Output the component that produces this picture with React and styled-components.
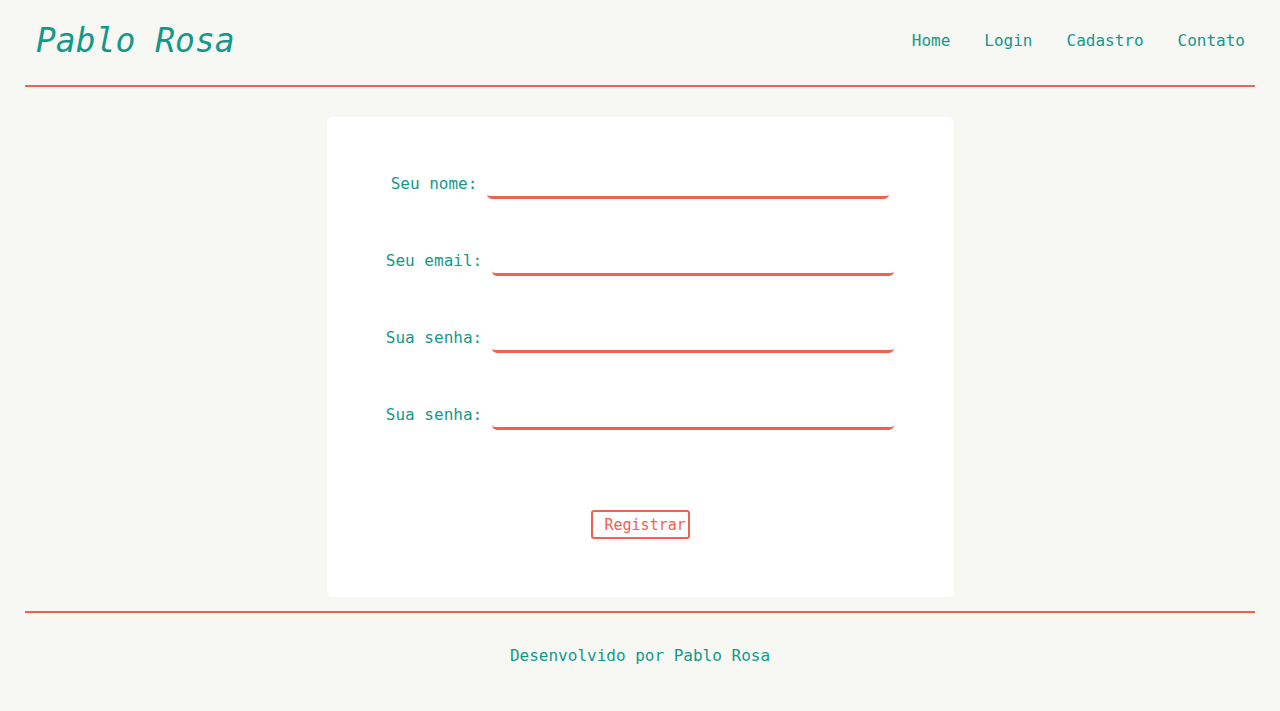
import React, { useState } from 'react';
import styled, { createGlobalStyle } from 'styled-components';

const TEAL = '#13998a';
const CORAL = '#f2604e';

const GlobalStyle = createGlobalStyle`
  html, body {
    margin: 0;
    padding: 0;
    background-color: #f7f7f3;
  }
  body {
    font-family: "DejaVu Sans Mono", "Liberation Mono", monospace;
    color: ${TEAL};
  }
  * {
    box-sizing: border-box;
  }
`;

const Page = styled.div`
  padding: 0 25px;
  min-height: 711px;
`;

const Header = styled.header`
  display: flex;
  align-items: center;
  justify-content: space-between;
  height: 87px;
  padding: 0 10px 5px 11px;
  border-bottom: 2px solid ${CORAL};
`;

const Logo = styled.h1`
  margin: 0;
  font-size: 33px;
  font-style: italic;
  font-weight: normal;
  color: ${TEAL};
`;

const Nav = styled.nav`
  display: flex;
  gap: 34px;
`;

const NavLink = styled.a`
  color: ${TEAL};
  font-size: 16px;
  text-decoration: none;
  cursor: pointer;
`;

const Main = styled.main`
  padding: 30px 0 14px;
`;

const Card = styled.form`
  width: 627px;
  margin: 0 auto;
  background-color: #fff;
  border-radius: 6px;
  padding: 57px 0 58px;
  display: flex;
  flex-direction: column;
  align-items: center;
`;

const Row = styled.div`
  display: flex;
  align-items: center;
  justify-content: center;
  gap: 10px;
  height: 25px;
  margin-bottom: ${(p) => (p.last ? '80px' : '52px')};
`;

const Label = styled.label`
  font-size: 16px;
  color: ${TEAL};
  padding-bottom: 6px;
  white-space: pre;
`;

const Input = styled.input`
  width: 402px;
  height: 25px;
  border: none;
  border-bottom: 3px solid ${CORAL};
  border-radius: 5px;
  background: #fff;
  outline: none;
  font-family: inherit;
  font-size: 14px;
  padding: 0 6px;
`;

const Button = styled.button`
  height: 29px;
  width: 99px;
  padding: 0 0 0 12px;
  text-align: left;
  background: #fff;
  color: ${CORAL};
  border: 2px solid ${CORAL};
  border-radius: 3px;
  font-family: inherit;
  font-size: 15px;
  cursor: pointer;
  white-space: nowrap;
  overflow: hidden;
`;

const Footer = styled.footer`
  border-top: 2px solid ${CORAL};
  padding: 33px 0 40px;
  text-align: center;
  font-size: 16px;
  color: ${TEAL};
`;

const fields = [
  { id: 'nome', label: 'Seu nome:', type: 'text' },
  { id: 'email', label: 'Seu email:', type: 'email' },
  { id: 'senha', label: 'Sua senha:', type: 'password' },
  { id: 'senha2', label: 'Sua senha:', type: 'password' },
];

function App() {
  const [values, setValues] = useState({});

  const handleChange = (id) => (e) => setValues({ ...values, [id]: e.target.value });

  return (
    <>
      <GlobalStyle />
      <Page>
        <Header>
          <Logo>Pablo Rosa</Logo>
          <Nav>
            <NavLink>Home</NavLink>
            <NavLink>Login</NavLink>
            <NavLink>Cadastro</NavLink>
            <NavLink>Contato</NavLink>
          </Nav>
        </Header>
        <Main>
          <Card onSubmit={(e) => e.preventDefault()}>
            {fields.map((f, i) => (
              <Row key={f.id} last={i === fields.length - 1}>
                <Label htmlFor={f.id}>{f.label}</Label>
                <Input
                  id={f.id}
                  type={f.type}
                  value={values[f.id] || ''}
                  onChange={handleChange(f.id)}
                />
              </Row>
            ))}
            <Button type="submit">Registrar</Button>
          </Card>
        </Main>
        <Footer>Desenvolvido por Pablo Rosa</Footer>
      </Page>
    </>
  );
}

export default App;
